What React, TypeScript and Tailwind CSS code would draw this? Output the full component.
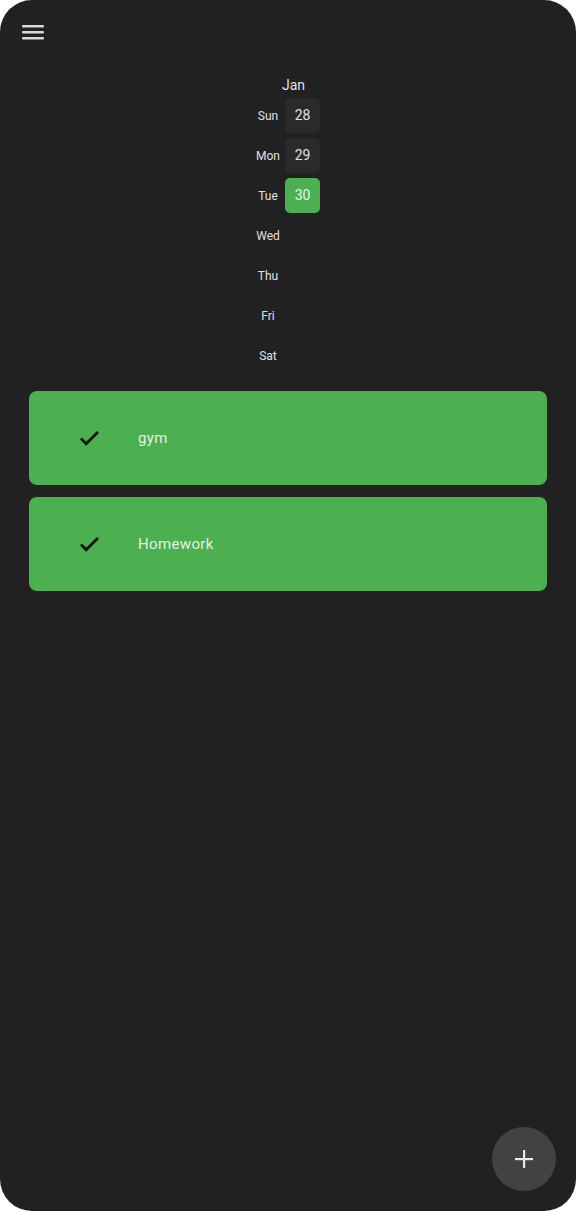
import React from "react";

const days = [
  { d: "Sun", n: "28" },
  { d: "Mon", n: "29" },
  { d: "Tue", n: "30", active: true },
  { d: "Wed" },
  { d: "Thu" },
  { d: "Fri" },
  { d: "Sat" },
];

const tasks = ["gym", "Homework"];

export default function App() {
  return (
    <div className="bg-white w-[576px] h-[1211px]" style={{ fontFamily: "Roboto, 'Noto Sans', sans-serif" }}>
      <div className="relative bg-[#212121] w-full h-full rounded-[32px] overflow-hidden">
        <div className="pt-[24px] pl-[22px] h-[75px]">
          <svg width="22" height="16" viewBox="0 0 22 16">
            <rect x="0" y="1" width="22" height="2.6" rx="1" fill="#d9d9d9" />
            <rect x="0" y="7" width="22" height="2.6" rx="1" fill="#d9d9d9" />
            <rect x="0" y="13" width="22" height="2.6" rx="1" fill="#d9d9d9" />
          </svg>
        </div>
        <div className="flex justify-center">
          <div className="w-[70px] mr-[4px] flex flex-col">
            <div className="h-[20px] pl-[15px] text-center text-[14px] leading-[20px] text-[#e0e0e0]">Jan</div>
            {days.map((r) => (
              <div key={r.d} className="h-[40px] flex items-center">
                <div className="w-[34px] pt-[2px] text-center text-[12px] text-[#e0e0e0]">{r.d}</div>
                {r.n ? (
                  <div
                    className={
                      r.active
                        ? "w-[35px] h-[35px] rounded-[5px] flex items-center justify-center text-[14px] bg-[#4caf50] text-[#eaf6ea]"
                        : "w-[35px] h-[35px] rounded-[5px] flex items-center justify-center text-[14px] bg-[#2a2a2a] text-[#e0e0e0]"
                    }
                  >
                    {r.n}
                  </div>
                ) : null}
              </div>
            ))}
          </div>
        </div>
        <div className="mt-[16px] px-[29px] flex flex-col gap-[12px]">
          {tasks.map((t) => (
            <div key={t} className="h-[94px] rounded-[8px] bg-[#4caf50] flex items-center">
              <svg className="ml-[48px]" width="24" height="24" viewBox="0 0 24 24">
                <path d="M4 12.5l5.2 5.2L21 6" fill="none" stroke="#111" strokeWidth="2.8" />
              </svg>
              <div className="ml-[37px] text-[15px] text-[#e3f2e3] tracking-[0.35px]">{t}</div>
            </div>
          ))}
        </div>
        <div className="absolute right-[20px] bottom-[20px] w-[64px] h-[64px] rounded-full bg-[#424242] flex items-center justify-center">
          <svg width="20" height="20" viewBox="0 0 20 20">
            <rect x="9" y="1" width="2.2" height="18" fill="#e8e8e8" />
            <rect x="1" y="9" width="18" height="2.2" fill="#e8e8e8" />
          </svg>
        </div>
      </div>
    </div>
  );
}
